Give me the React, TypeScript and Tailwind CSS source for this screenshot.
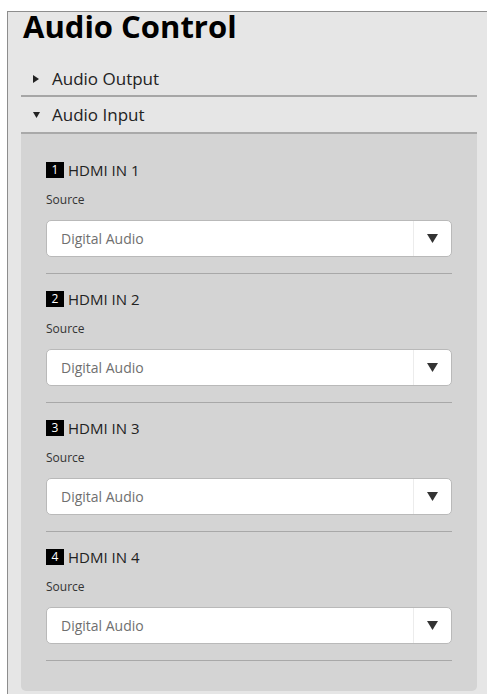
const inputs = [1, 2, 3, 4];

function SourceSelect() {
  return (
    <div className="flex h-[37px] items-stretch rounded-[5px] border border-[#b9b9b9] bg-white">
      <div className="flex flex-1 items-center pl-[14px] text-[14px] text-[#6f6f6f]">Digital Audio</div>
      <div className="flex w-[38px] items-center justify-center border-l border-[#ececec]">
        <svg width="11" height="9" viewBox="0 0 11 9">
          <path d="M0 0h11L5.5 9z" fill="#333" />
        </svg>
      </div>
    </div>
  );
}

function InputSection({ n }: { n: number }) {
  return (
    <div className={n === 1 ? '' : 'pt-[17px]'}>
      <div className="flex h-[16px] items-center gap-[4px]">
        <span className="flex h-[16px] w-[18px] items-center justify-center bg-black text-[12px] leading-none text-white">
          {n}
        </span>
        <span className="text-[15px] text-[#222]">HDMI IN {n}</span>
      </div>
      <div className="mt-[12px] text-[12px] leading-[20px] font-medium text-[#333]">Source</div>
      <div className="mt-[10px]">
        <SourceSelect />
      </div>
      <div className="mt-[16px] h-px bg-[#a8a8a8]" />
    </div>
  );
}

export default function App() {
  return (
    <div className="h-[694px] overflow-hidden bg-white pl-[7px] pt-[11px] font-['Open_Sans',sans-serif]">
      <div className="h-full border-l border-t border-[#8d8d8d] bg-[#e6e6e6] pl-[13px] pr-[10px]">
        <div className="flex h-[50px] items-start">
          <h1 className="pl-[2px] text-[31px] leading-[28px] font-bold text-black">Audio Control</h1>
        </div>

        {/* Audio Output (collapsed) */}
        <div className="flex h-[35px] items-center gap-[13px] border-b-2 border-[#a6a6a6] pl-[12px] text-[17px] text-[#222]">
          <svg width="6" height="8" viewBox="0 0 6 8">
            <path d="M0 0l6 4-6 4z" fill="#222" />
          </svg>
          <span>Audio Output</span>
        </div>

        {/* Audio Input (expanded) */}
        <div className="flex h-[35px] items-center gap-[12px] pl-[12px] text-[17px] text-[#222]">
          <svg width="7" height="6" viewBox="0 0 7 6">
            <path d="M0 0h7L3.5 6z" fill="#222" />
          </svg>
          <span>Audio Input</span>
        </div>
        <div className="rounded-b-[5px] border-t-2 border-[#a9a9a9] bg-[#d4d4d4] px-[25px] pt-[28px] pb-[30px]">
          {inputs.map((n) => (
            <InputSection key={n} n={n} />
          ))}
        </div>
      </div>
    </div>
  );
}
